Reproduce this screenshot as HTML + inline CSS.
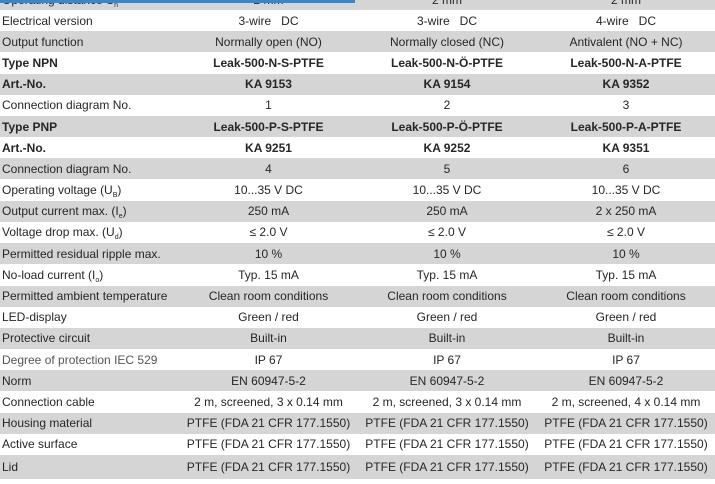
<!DOCTYPE html>
<html><head><meta charset="utf-8"><style>
body{margin:0;width:715px;height:484px;overflow:hidden;background:#fff;font-family:"Liberation Sans",Arial,sans-serif;font-size:12px;color:#262626;position:relative}
.r{position:absolute;left:0;width:715px;height:21.2px;display:flex;align-items:center}
.g{background:#d5d5d5}
.l{width:180px;padding-left:2px;box-sizing:border-box;white-space:nowrap}
.c{text-align:center;white-space:nowrap}
.c1{width:177px}.c2{width:180px}.c3{width:178px}
.b{font-weight:bold}
.m .l{color:#555}
.blue{position:absolute;left:0;top:0;width:355px;height:3px;background:#3a86c8}
sub{font-size:7px;line-height:0;vertical-align:-3px}
</style></head><body>
<div class="r g" style="top:-11px;height:21px"><div class="l">Operating distance S<sub>n</sub></div><div class="c c1">2 mm</div><div class="c c2">2 mm</div><div class="c c3">2 mm</div></div>
<div class="blue"></div>
<div class="r" style="top:10px"><div class="l">Electrical version</div><div class="c c1">3-wire&nbsp;&nbsp; DC</div><div class="c c2">3-wire&nbsp;&nbsp; DC</div><div class="c c3">4-wire&nbsp;&nbsp; DC</div></div>
<div class="r g" style="top:31.2px"><div class="l">Output function</div><div class="c c1">Normally open (NO)</div><div class="c c2">Normally closed (NC)</div><div class="c c3">Antivalent (NO + NC)</div></div>
<div class="r b" style="top:52.4px"><div class="l">Type NPN</div><div class="c c1">Leak-500-N-S-PTFE</div><div class="c c2">Leak-500-N-Ö-PTFE</div><div class="c c3">Leak-500-N-A-PTFE</div></div>
<div class="r g b" style="top:73.6px"><div class="l">Art.-No.</div><div class="c c1">KA 9153</div><div class="c c2">KA 9154</div><div class="c c3">KA 9352</div></div>
<div class="r" style="top:94.8px"><div class="l">Connection diagram No.</div><div class="c c1">1</div><div class="c c2">2</div><div class="c c3">3</div></div>
<div class="r g b" style="top:116px"><div class="l">Type PNP</div><div class="c c1">Leak-500-P-S-PTFE</div><div class="c c2">Leak-500-P-Ö-PTFE</div><div class="c c3">Leak-500-P-A-PTFE</div></div>
<div class="r b" style="top:137.1px"><div class="l">Art.-No.</div><div class="c c1">KA 9251</div><div class="c c2">KA 9252</div><div class="c c3">KA 9351</div></div>
<div class="r g" style="top:158.3px"><div class="l">Connection diagram No.</div><div class="c c1">4</div><div class="c c2">5</div><div class="c c3">6</div></div>
<div class="r" style="top:179.5px"><div class="l">Operating voltage (U<sub>B</sub>)</div><div class="c c1">10...35 V DC</div><div class="c c2">10...35 V DC</div><div class="c c3">10...35 V DC</div></div>
<div class="r g" style="top:200.7px"><div class="l">Output current max. (I<sub>e</sub>)</div><div class="c c1">250 mA</div><div class="c c2">250 mA</div><div class="c c3">2 x 250 mA</div></div>
<div class="r" style="top:221.9px"><div class="l">Voltage drop max. (U<sub>d</sub>)</div><div class="c c1">≤ 2.0 V</div><div class="c c2">≤ 2.0 V</div><div class="c c3">≤ 2.0 V</div></div>
<div class="r g" style="top:243.1px"><div class="l">Permitted residual ripple max.</div><div class="c c1">10 %</div><div class="c c2">10 %</div><div class="c c3">10 %</div></div>
<div class="r" style="top:264.3px"><div class="l">No-load current (I<sub>o</sub>)</div><div class="c c1">Typ. 15 mA</div><div class="c c2">Typ. 15 mA</div><div class="c c3">Typ. 15 mA</div></div>
<div class="r g" style="top:285.5px"><div class="l">Permitted ambient temperature</div><div class="c c1">Clean room conditions</div><div class="c c2">Clean room conditions</div><div class="c c3">Clean room conditions</div></div>
<div class="r" style="top:306.7px"><div class="l">LED-display</div><div class="c c1">Green / red</div><div class="c c2">Green / red</div><div class="c c3">Green / red</div></div>
<div class="r g" style="top:327.9px"><div class="l">Protective circuit</div><div class="c c1">Built-in</div><div class="c c2">Built-in</div><div class="c c3">Built-in</div></div>
<div class="r m" style="top:349px"><div class="l">Degree of protection IEC 529</div><div class="c c1">IP 67</div><div class="c c2">IP 67</div><div class="c c3">IP 67</div></div>
<div class="r g" style="top:370.2px"><div class="l">Norm</div><div class="c c1">EN 60947-5-2</div><div class="c c2">EN 60947-5-2</div><div class="c c3">EN 60947-5-2</div></div>
<div class="r" style="top:391.4px"><div class="l">Connection cable</div><div class="c c1">2 m, screened, 3 x 0.14 mm</div><div class="c c2">2 m, screened, 3 x 0.14 mm</div><div class="c c3">2 m, screened, 4 x 0.14 mm</div></div>
<div class="r g" style="top:412.6px"><div class="l">Housing material</div><div class="c c1">PTFE (FDA 21 CFR 177.1550)</div><div class="c c2">PTFE (FDA 21 CFR 177.1550)</div><div class="c c3">PTFE (FDA 21 CFR 177.1550)</div></div>
<div class="r" style="top:433.8px"><div class="l">Active surface</div><div class="c c1">PTFE (FDA 21 CFR 177.1550)</div><div class="c c2">PTFE (FDA 21 CFR 177.1550)</div><div class="c c3">PTFE (FDA 21 CFR 177.1550)</div></div>
<div class="r g" style="top:455px;height:24px"><div class="l">Lid</div><div class="c c1">PTFE (FDA 21 CFR 177.1550)</div><div class="c c2">PTFE (FDA 21 CFR 177.1550)</div><div class="c c3">PTFE (FDA 21 CFR 177.1550)</div></div>
</body></html>
